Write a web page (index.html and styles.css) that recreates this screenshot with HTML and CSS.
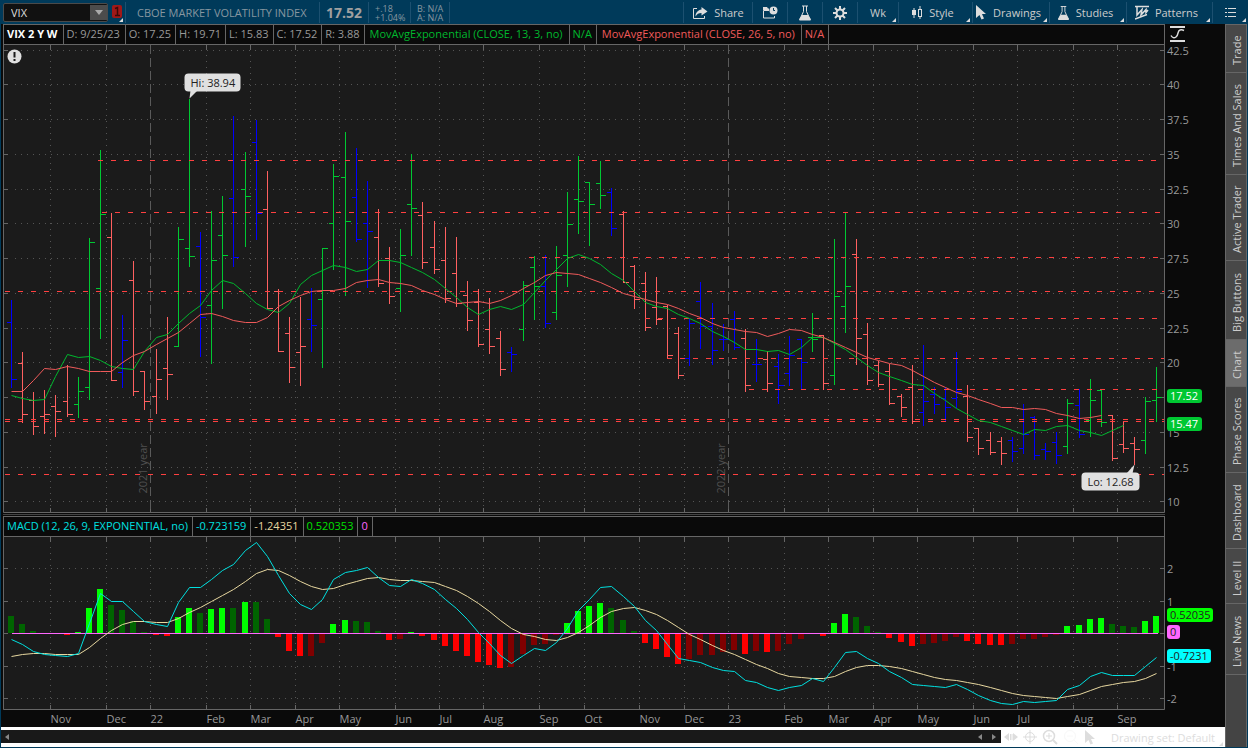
FILE: index.html
```
<!DOCTYPE html>
<html lang="en">
<head>
    <meta charset="UTF-8">
    <meta name="viewport" content="width=device-width, initial-scale=1">
    <title>VIX - Chart</title>
    <link rel="stylesheet" href="styles.css">
</head>
<body>
<header class="toolbar">
    <form class="symbol" action="javascript:void(0);">
        <input type="text" value="VIX" aria-label="Symbol">
        <button type="button" aria-label="Symbol list">
            <svg width="8" height="5" viewBox="0 0 8 5"><path d="M0 0H8L4 5Z" fill="#aaa"/></svg>
        </button>
    </form>
    <button class="link more" aria-label="Link 1">
        <svg width="10" height="13" viewBox="0 0 10 13">
            <rect width="10" height="13" rx="2" fill="#a01818"/>
            <path d="M3 3.500L5.500 2.500V10M3 10.500H8" stroke="#3c0808" stroke-width="1.500" fill="none"/>
        </svg>
    </button>
    <div class="cell name">CBOE MARKET VOLATILITY INDEX</div>
    <div class="cell last">17.52</div>
    <div class="cell two"><span>+.18</span><span>+1.04%</span></div>
    <div class="cell two"><span>B: N/A</span><span>A: N/A</span></div>
    <div class="cell fill"></div>
    <button class="cell share">
        <svg width="16" height="14" viewBox="0 0 16 14">
            <path d="M5 2.500H1.500V12.500H12.500V10" stroke="#ddd" fill="none"/>
            <path d="M9.500 1L15.500 5.500L9.500 9.500V7C6.500 7 5 8 3.500 10.500C3.500 6.500 6 4 9.500 3.500Z" fill="#ddd"/>
        </svg>
        Share
    </button>
    <button class="cell icon36" aria-label="Calendar">
        <svg width="16" height="13" viewBox="0 0 16 13">
            <path d="M7 4.500H1.500V12H12.500V10" stroke="#ddd" fill="none"/>
            <path d="M1 1H5L6 2.500H7V4H1Z" fill="#ddd"/>
            <circle cx="11.500" cy="4.500" r="4" fill="#ddd"/>
            <path d="M11.500 2V4.500H13" stroke="#003a5a" fill="none"/>
        </svg>
    </button>
    <button class="cell icon35" aria-label="Lab">
        <svg width="14" height="16" viewBox="0 0 14 16">
            <path d="M4 1H10M5.500 1V6.500L2 14H12L8.500 6.500V1" stroke="#ddd" fill="none"/>
            <path d="M4 10H10L13 14.500Q13 15.500 12 15.500H2Q1 15.500 1 14.500Z" fill="#ddd"/>
        </svg>
    </button>
    <button class="cell icon35" aria-label="Settings">
        <svg width="14" height="14" viewBox="0 0 14 14">
            <g stroke="#ddd" stroke-width="2"><path d="M7 0V14M0 7H14M2 2L12 12M12 2L2 12"/></g>
            <circle cx="7" cy="7" r="4.500" fill="#ddd"/><circle cx="7" cy="7" r="2.500" fill="#003a5a"/>
        </svg>
    </button>
    <button class="cell wk more">Wk</button>
    <button class="cell style more">
        <svg width="12" height="14" viewBox="0 0 12 14">
            <path d="M3 2V12M9 0V3M9 10V13" stroke="#ddd"/>
            <rect x="1" y="4" width="4" height="5" fill="#ddd"/>
            <rect x="7.500" y="3.500" width="3" height="7" stroke="#ddd" fill="none"/>
        </svg>
        Style
    </button>
    <button class="cell drawings more">
        <svg width="12" height="15" viewBox="0 0 12 15">
            <path d="M1 0L11 9H7L9 13.500L6.500 14.500L4.500 10L1 13Z" fill="#ddd"/>
        </svg>
        Drawings
    </button>
    <button class="cell studies more">
        <svg width="13" height="16" viewBox="0 0 14 16">
            <path d="M4 1H10M5.500 1V6.500L2 14H12L8.500 6.500V1" stroke="#ddd" fill="none"/>
            <path d="M4 10H10L13 14.500Q13 15.500 12 15.500H2Q1 15.500 1 14.500Z" fill="#ddd"/>
        </svg>
        Studies
    </button>
    <button class="cell patterns more">
        <svg width="14" height="15" viewBox="0 0 14 15">
            <path d="M0 1.500H14M0 14L12 9.500" stroke="#ddd" stroke-width="1.500"/>
            <path d="M2 2V10L7 4.500L6 10L11 4.500V7.500L13 5" stroke="#ddd" stroke-width="1.500" fill="none"/>
        </svg>
        Patterns
    </button>
    <button class="cell menu more" aria-label="Menu">
        <svg width="11" height="11" viewBox="0 0 11 11">
            <path d="M0 1.500H2M3 1.500H11M0 5.500H2M3 5.500H11M0 9.500H2M3 9.500H11" stroke="#ddd"/>
        </svg>
    </button>
</header>

<main class="workspace">
    <div class="charts">
        <div class="legend-row">
            <div class="legend">
                <span class="title">VIX 2 Y W</span><span>D: 9/25/23</span><span>O: 17.25</span><span>H: 19.71</span><span>L: 15.83</span><span>C: 17.52</span><span>R: 3.88</span><span class="green study">MovAvgExponential (CLOSE, 13, 3, no)</span><span class="green">N/A</span><span class="red study">MovAvgExponential (CLOSE, 26, 5, no)</span><span class="red">N/A</span>
            </div>
            <button class="scale" aria-label="Axis scale">
                <svg width="15" height="16" viewBox="0 0 15 16">
                    <path d="M0 1H15M0 15H15" stroke="#ddd" stroke-width="2"/>
                    <path d="M1 9.500Q3 13 6 11C9 9 7 5 10 4Q12 3.500 14 4.500" stroke="#ddd" stroke-width="1.500" fill="none"/>
                </svg>
            </button>
        </div>
        <div class="panel price"><svg id="price"></svg></div>
        <div class="splitter"></div>
        <div class="legend-row">
            <div class="legend">
                <span class="cyan">MACD (12, 26, 9, EXPONENTIAL, no)</span><span class="cyan">-0.723159</span><span class="cream">-1.24351</span><span class="lime">0.520353</span><span class="pink">0</span>
            </div>
            <div class="scale"></div>
        </div>
        <div class="panel macd"><svg id="macd"></svg></div>
        <footer class="bottom">
            <div class="scrollbar">
                <button aria-label="Scroll to start"><svg width="4" height="6" viewBox="0 0 4 6"><path d="M4 0V6L0 3Z" fill="#888"/></svg></button>
                <span class="track"></span>
                <button aria-label="Scroll left"><svg width="4" height="6" viewBox="0 0 4 6"><path d="M4 0V6L0 3Z" fill="#888"/></svg></button>
                <button aria-label="Scroll right"><svg width="4" height="6" viewBox="0 0 4 6"><path d="M0 0V6L4 3Z" fill="#888"/></svg></button>
            </div>
            <div class="tools more">
                <button aria-label="Expand">
                    <svg width="14" height="10" viewBox="0 0 14 10"><path d="M5 1V9L0 5ZM9 1V9L14 5Z" fill="#ddd"/><path d="M6.500 2V8M8 2V8" stroke="#ddd"/></svg>
                </button>
                <button aria-label="Crosshair">
                    <svg width="14" height="14" viewBox="0 0 14 14"><circle cx="7" cy="7" r="4.500" stroke="#ddd" fill="none"/><path d="M7 0V14M0 7H14" stroke="#ddd"/></svg>
                </button>
                <button aria-label="Zoom in">
                    <svg width="16" height="16" viewBox="0 0 16 16"><circle cx="7" cy="7" r="5.500" stroke="#ddd" stroke-width="1.500" fill="none"/><path d="M7 4V10M4 7H10" stroke="#ddd"/><path d="M11 11L15 15" stroke="#ddd" stroke-width="2"/></svg>
                </button>
                <button aria-label="Zoom out" disabled>
                    <svg width="16" height="16" viewBox="0 0 16 16"><circle cx="7" cy="7" r="5.500" stroke="#f8f8f8" fill="none"/><path d="M4 7H10M11 11L15 15" stroke="#f8f8f8"/></svg>
                </button>
                <button aria-label="Pointer">
                    <svg width="12" height="15" viewBox="0 0 12 15"><path d="M1 0L11 9H7L9 13.500L6.500 14.500L4.500 10L1 13Z" fill="#ddd"/></svg>
                </button>
                <button class="set">Drawing set: Default</button>
            </div>
        </footer>
    </div>
    <nav class="tabs">
        <button class="t48">Trade</button>
        <button class="t102">Times And Sales</button>
        <button class="t86">Active Trader</button>
        <button class="t79">Big Buttons</button>
        <button class="t47 active">Chart</button>
        <button class="t86">Phase Scores</button>
        <button class="t76">Dashboard</button>
        <button class="t55">Level II</button>
        <button class="t71">Live News</button>
        <span class="rest"></span>
    </nav>
</main>
<script src="chart.js"></script>
</body>
</html>
```
FILE: styles.css
```
* {
    box-sizing: border-box;
}

body {
    margin: 0;
    height: 100vh;
    display: flex;
    flex-direction: column;
    overflow: hidden;
    background: #003a5a;
    color: #999;
    font: 11px "Open Sans", sans-serif;
}

button {
    margin: 0;
    padding: 0;
    border: 0;
    background: none;
    color: #ccc;
    font: inherit;
    white-space: nowrap;
}

svg {
    display: block;
    flex: none;
}

/* toolbar */
.toolbar {
    display: flex;
    align-items: stretch;
    height: 24px;
    padding: 2px 0 1px 3px;
    white-space: nowrap;
}

.symbol {
    display: flex;
    width: 105px;
    height: 19px;
    margin-top: 1px;
    border: 1px solid #4a4a4a;
    border-radius: 2px;
    background: #111;
}

.symbol input {
    flex: 1;
    min-width: 0;
    padding: 0 7px;
    border: 0;
    background: none;
    color: #ddd;
    font: inherit;
}

.symbol button {
    width: 17px;
    margin: 1px 0;
    background: #4c4c4c;
    display: flex;
    align-items: center;
    justify-content: center;
}

.link {
    width: 17px;
    padding: 3px 0 0 4px;
    display: flex;
}

.cell {
    display: flex;
    align-items: center;
    border-left: 1px solid #1c5070;
    font-size: 12px;
}

.more {
    position: relative;
}

.more::after {
    content: "";
    position: absolute;
    right: 2px;
    bottom: 1px;
    border: 2px solid;
    border-color: transparent #ddd #ddd transparent;
}

.name {
    width: 194px;
    padding-left: 11px;
    color: #8797a0;
    font-size: 11px;
}

.last {
    width: 49px;
    padding-left: 6px;
    color: #a0a0a0;
    font-size: 14px;
    font-weight: bold;
}

.two {
    width: 42px;
    padding-left: 6px;
    flex-direction: column;
    align-items: flex-start;
    justify-content: center;
    color: #8797a0;
    font-size: 9px;
    line-height: 9px;
}

.two + .two {
    width: 39px;
}

.fill {
    flex: 1;
}

button.cell {
    font-size: 11px;
    justify-content: center;
    gap: 6px;
}

.share { width: 69px; }
.icon36 { width: 35px; }
.icon35 { width: 35px; }
.wk { width: 41px; }
.style { width: 74px; }
.drawings { width: 77px; }
.studies { width: 77px; }
.patterns { width: 86px; }
.menu { width: 36px; }

button.style,
button.drawings,
button.studies,
button.patterns {
    padding-right: 6px;
}

/* charts */
.workspace {
    flex: 1;
    min-height: 0;
    display: flex;
    margin: 0 1px 1px;
}

.charts {
    flex: 1;
    min-width: 0;
    display: flex;
    flex-direction: column;
    background: #0a0a0a;
}

.legend-row {
    display: flex;
    padding-left: 2px;
}

.legend {
    flex: 1;
    display: flex;
    height: 21px;
    border: 1px solid #666;
    line-height: 17px;
    white-space: nowrap;
    overflow: hidden;
}

.legend span {
    padding: 0 4px 0 3px;
    border-right: 1px solid #666;
}

.legend .title {
    padding-right: 5px;
    color: #fff;
    font-weight: bold;
}

.legend .title + span {
    padding-right: 5px;
}

.legend .study {
    padding: 0 6px 0 5px;
}

.legend .green { color: #00b82e; }
.legend .red { color: #f05a5a; }
.legend .cyan { color: #00e0e0; }
.legend .cream { color: #e8d8a0; }
.legend .lime { color: #00e000; }
.legend .pink { color: #ff66ff; }

.scale {
    display: flex;
    align-items: flex-start;
    width: 60px;
    padding: 2px 0 0 5px;
}

.panel {
    min-height: 0;
    margin-left: 2px;
}

.panel svg {
    width: 100%;
    height: 100%;
    overflow: visible;
}

.price { flex: 468 1 0; }
.macd { flex: 190 1 0; }

.splitter {
    height: 1px;
    margin: 1px 60px 1px 2px;
    background: #444;
}

svg text {
    font: 11px "Open Sans", sans-serif;
    fill: #999;
}

svg .year { fill: #505050; }
svg .dark { fill: #222; }
svg .light { fill: #fff; }

/* scrollbar and drawing tools */
.bottom {
    display: flex;
    height: 20px;
    background: #fff;
}

.scrollbar {
    flex: 1;
    display: flex;
    align-items: center;
    height: 13px;
    margin-top: 3px;
    padding: 0 5px 0 4px;
    background: #191919;
}

.scrollbar .track {
    flex: 1;
}

.scrollbar button + button {
    margin-left: 10px;
}

.tools {
    width: 224px;
    display: flex;
    align-items: center;
    gap: 5px;
    padding-left: 3px;
}

.tools .set {
    margin-left: 10px;
    color: #ddd;
}

/* right hand tabs */
.tabs {
    width: 22px;
    display: flex;
    flex-direction: column;
    border: solid #666;
    border-width: 0 1px;
    background: #444;
}

/* turned upside down, so the bottom edge is drawn on top */
.tabs button {
    width: 20px;
    padding-bottom: 4px;
    border-bottom: 1px solid #666;
    background: #484848;
    writing-mode: vertical-rl;
    transform: rotate(180deg);
    text-align: center;
}

.tabs .active {
    background: #6c6c6c;
}

.tabs .rest {
    flex: 1;
    border-top: 1px solid #666;
}

.t47 { height: 47px; }
.t48 { height: 48px; }
.t55 { height: 55px; }
.t71 { height: 71px; }
.t76 { height: 76px; }
.t79 { height: 79px; }
.t86 { height: 86px; }
.t102 { height: 102px; }
```
FILE: chart.js
```
var PLOT_W = 1162, AXIS_W = 60;
var COLORS = {r: '#ff6060', g: '#00c832', b: '#0000ff'};
var HIST = {G: '#00ff00', g: '#006400', R: '#ff0000', r: '#800000'};

// colour, high, low, open, close
var bars = [
    ['b',299,387,322,379],['r',351,422,363,414],['r',391,434,400,426],['r',389,433,416,414],['r',394,436,406,411],
    ['r',364,416,401,414],['g',376,417,404,391],['g',237,399,387,242],['g',149,338,288,214],['r',212,380,237,380],
    ['b',314,387,372,340],['r',260,395,280,391],['r',370,409,371,401],['r',348,413,396,379],['r',316,399,368,374],
    ['g',226,346,346,239],['g',98,266,248,256],['b',231,356,246,317],['g',210,363,305,260],['g',195,308,235,255],
    ['b',115,266,198,257],['g',151,246,189,196],['b',119,239,142,213],['r',170,308,209,308],['r',288,351,291,351],
    ['r',316,382,333,367],['r',296,385,352,346],['b',287,351,319,325],['g',247,367,299,248],['g',163,269,223,176],
    ['g',131,295,177,221],['b',147,241,197,239],['b',180,287,223,231],['r',208,286,237,283],['r',246,303,258,296],
    ['g',228,311,288,255],['g',153,255,204,208],['r',201,268,215,262],['r',220,273,247,269],['r',226,302,260,298],
    ['r',236,306,273,303],['r',280,330,295,320],['r',288,346,302,344],['r',297,353,329,346],['r',330,375,338,369],
    ['b',346,371,352,354],['g',280,340,329,285],['g',255,319,267,286],['b',254,327,286,323],['g',245,319,312,275],
    ['g',191,286,255,224],['g',155,233,199,201],['g',181,245,182,204],['g',160,208,183,195],['b',187,235,192,228],
    ['r',210,282,214,282],['r',264,308,266,299],['r',271,330,283,327],['r',276,324,307,319],['r',304,358,306,355],
    ['r',326,378,333,375],['b',318,365,358,323],['b',281,348,301,326],['b',302,364,326,350],['b',323,350,339,339],
    ['b',310,349,319,347],['r',328,391,338,385],['b',338,381,364,364],['r',350,391,359,383],['b',353,403,366,385],
    ['b',335,385,373,355],['b',339,389,339,362],['g',312,351,337,339],['r',334,389,335,383],['g',238,384,375,296],
    ['g',212,332,306,286],['r',238,364,254,338],['r',322,384,334,380],['r',360,386,365,384],['r',363,404,371,403],
    ['r',393,416,396,407],['r',364,423,387,421],['b',344,425,412,401],['b',386,413,394,404],['b',386,420,398,407],
    ['b',351,407,398,391],['r',384,441,396,437],['r',428,454,428,448],['r',431,454,440,452],['r',436,464,441,453],
    ['b',436,461,440,451],['b',403,453,448,434],['b',415,459,417,455],['b',442,459,449,451],['b',431,463,442,455],
    ['g',398,453,446,403],['b',388,437,405,434],['g',378,436,420,400],['g',389,426,390,422],['r',414,460,415,458],
    ['r',421,452,444,448],['r',436,464,443,449],['g',396,453,440,401],['g',366,421,400,397]
];

var ema13 = [395,398,400,399,376,354,357,356,360,366,368,369,351,337,334,323,313,305,290,280,283,293,303,309,312,303,
    284,275,270,265,267,271,269,260,260,262,267,272,279,288,297,307,314,309,306,309,304,292,280,269,258,254,258,264,
    273,280,291,302,306,308,314,318,323,331,336,342,349,349,351,350,354,347,337,337,343,349,357,365,372,376,380,384,
    385,393,400,408,414,420,422,426,430,434,429,430,426,425,430,432,435,430,425];

var ema26 = [391,391,380,368,369,366,368,371,371,371,362,355,351,344,338,332,323,314,313,316,320,322,322,317,306,300,
    295,291,290,290,288,282,280,279,282,283,285,290,294,299,303,302,301,303,300,295,288,282,275,272,273,274,278,282,
    287,293,296,299,302,304,308,313,317,323,327,329,331,332,336,333,329,330,334,337,342,347,352,357,360,363,365,370,
    376,382,387,392,395,399,403,407,407,409,408,409,413,415,418,417,415];

var macdLine = [639,644,651,654,655,656,653,623,593,601,601,611,621,624,626,602,587,587,579,570,564,550,542,556,575,
    593,604,609,599,579,572,570,567,577,585,586,579,583,589,599,608,619,632,643,655,663,655,648,650,642,628,610,599,
    587,586,596,606,620,630,644,658,660,662,667,670,671,680,682,687,690,687,685,678,681,667,652,651,658,663,671,677,
    684,685,686,687,684,689,695,700,703,704,701,702,701,700,689,685,676,672,675,675,675,666,657];

var signalLine = [656,654,653,653,654,654,654,647,638,630,624,621,621,622,622,618,612,607,601,595,589,581,573,569,570,
    575,581,586,589,588,584,581,578,577,579,580,580,581,582,586,590,596,603,611,620,628,634,636,639,640,637,632,625,
    617,611,608,607,610,614,620,627,634,639,645,650,654,659,664,668,673,676,677,678,678,676,671,667,665,665,666,668,
    671,674,677,679,680,682,684,687,690,693,695,696,697,698,696,694,690,686,684,682,681,678,673];

var hist = ('g17 g9 g2 g0 R-1 R-2 G1 G25 G44 g28 g23 g12 g1 R-2 R-3 G16 G25 g20 G24 G25 g25 G31 g31 g14 R-4 R-18 R-23 ' +
    'r-23 r-10 G9 G13 g12 g11 g2 R-7 r-6 G1 R-3 R-7 R-13 R-18 R-23 R-29 R-32 R-35 r-34 r-21 r-12 r-11 r-2 G10 G22 G27 ' +
    'G30 g25 g13 g2 R-10 R-16 R-24 R-31 r-26 r-22 r-22 r-19 r-17 R-21 r-18 R-19 r-18 r-11 r-6 r-1 R-3 G10 G19 g16 g7 ' +
    'g1 R-5 R-9 R-13 r-11 r-10 r-8 r-4 R-8 R-11 R-12 R-12 r-11 r-6 r-6 r-4 r-2 G7 G8 G14 G15 g9 g7 g6 G12 G17').split(' ');

// y, first x of each support / resistance level
var levels = [[160,98],[212,102],[257,529],[291,5],[318,645],[358,667],[389,749],[419,5],[421,5],[474,5]];

var prices = [[50,'42.5'],[84,'40'],[119,'37.5'],[154,'35'],[189,'32.5'],[223,'30'],[258,'27.5'],[293,'25'],
    [328,'22.5'],[362,'20'],[397,''],[432,'15'],[467,'12.5'],[501,'10']];

var months = [[50,'Nov'],[106,'Dec'],[150,'22'],[206,'Feb'],[250,'Mar'],[295,'Apr'],[339,'May'],[395,'Jun'],[439,'Jul'],
    [483,'Aug'],[539,'Sep'],[584,'Oct'],[639,'Nov'],[684,'Dec'],[728,'23'],[784,'Feb'],[828,'Mar'],[873,'Apr'],
    [917,'May'],[973,'Jun'],[1017,'Jul'],[1073,'Aug'],[1117,'Sep']];

function add(svg, tag, attrs, text) {
    var el = document.createElementNS('http://www.w3.org/2000/svg', tag);
    for (var k in attrs) el.setAttribute(k, attrs[k]);
    if (text) el.textContent = text;
    svg.appendChild(el);
}

function line(svg, x1, y1, x2, y2, color, dash) {
    add(svg, 'line', {x1: x1, y1: y1, x2: x2, y2: y2, stroke: color,
        'stroke-dasharray': dash || 'none', 'shape-rendering': 'crispEdges'});
}

function barX(i) {
    return Math.round(11 + 11.12 * i);
}

function tag(svg, x, y, w, label, color, cls) {
    add(svg, 'rect', {x: x, y: y, width: w, height: 14, rx: 3, fill: color});
    add(svg, 'text', {x: x + 3, y: y + 11, 'class': cls}, label);
}

// scales for one panel: top is the first plot row, h the plot height
function setup(id, top, h, footer) {
    var svg = document.getElementById(id);
    var box = svg.getBoundingClientRect();
    svg.innerHTML = '';
    var p = {svg: svg, w: Math.round(box.width) - AXIS_W, h: Math.round(box.height) - footer};
    p.x = function (v) { return Math.round((v - 3) * p.w / PLOT_W) + 0.5; };
    p.y = function (v) { return Math.round((v - top) * p.h / h) + 0.5; };
    add(svg, 'rect', {width: p.w, height: p.h, fill: '#1b1b1b'});
    return p;
}

function grid(p, rows) {
    rows.forEach(function (r) {
        var y = p.y(r[0]);
        line(p.svg, 12, y, p.w - 13, y, '#555', '1 5');
        line(p.svg, 0, y, 5, y, '#666');
        line(p.svg, p.w - 5, y, p.w, y, '#666');
        if (r[1]) add(p.svg, 'text', {x: p.w + 2, y: y + 4}, r[1]);
    });
    months.forEach(function (m) {
        var x = p.x(m[0]);
        if (!/\d/.test(m[1]) || p.svg.id == 'macd') line(p.svg, x, 10, x, p.h - 5, '#555', '1 5');
        line(p.svg, x, 0, x, 5, '#666');
        line(p.svg, x, p.h - 5, x, p.h, '#666');
    });
}

function frame(p) {
    add(p.svg, 'path', {d: 'M0.5 0V' + (p.h - 0.5) + 'H' + (p.w - 0.5) + 'V0', stroke: '#666', fill: 'none'});
}

function curve(p, data, color) {
    var pts = data.map(function (v, i) { return p.x(barX(i)) + ',' + p.y(v); }).join(' ');
    add(p.svg, 'polyline', {points: pts, stroke: color, fill: 'none'});
}

function drawPrice() {
    var p = setup('price', 45, 468, 0), svg = p.svg;
    grid(p, prices);
    [[150, '2021 year'], [728, '2022 year']].forEach(function (v) {
        var x = p.x(v[0]);
        line(svg, x, 0, x, p.h, '#5a5a5a', '9 4');
        add(svg, 'text', {transform: 'translate(' + (x - 4) + ',' + p.y(493) + ') rotate(-90)', 'class': 'year'}, v[1]);
    });
    bars.forEach(function (b, i) {
        var x = p.x(barX(i)), c = COLORS[b[0]];
        line(svg, x, p.y(b[1]), x, p.y(b[2]), c);
        line(svg, x - 4.5, p.y(b[3]), x, p.y(b[3]), c);
        line(svg, x, p.y(b[4]), x + 5, p.y(b[4]), c);
    });
    levels.forEach(function (l) {
        line(svg, p.x(l[1]) - 0.5, p.y(l[0]), p.w - 1, p.y(l[0]), '#ff4040', '5 8');
    });
    curve(p, ema13, '#00b82e');
    curve(p, ema26, '#f05a5a');
    frame(p);

    // high and low callouts
    var x = p.x(189), y = p.y(98);
    add(svg, 'path', {d: 'M' + x + ' ' + y + 'l1 -8h7z', fill: '#e0e0e0'});
    add(svg, 'rect', {x: x - 5, y: y - 25, width: 56, height: 18, rx: 4, fill: '#e0e0e0'});
    add(svg, 'text', {x: x + 1, y: y - 12, 'class': 'dark'}, 'Hi: 38.94');
    x = p.x(1134);
    y = p.y(464);
    add(svg, 'path', {d: 'M' + x + ' ' + y + 'l-8 9h6z', fill: '#e0e0e0'});
    add(svg, 'rect', {x: x - 53, y: y + 8, width: 58, height: 18, rx: 4, fill: '#e0e0e0'});
    add(svg, 'text', {x: x - 47, y: y + 21, 'class': 'dark'}, 'Lo: 12.68');

    // notice icon
    add(svg, 'circle', {cx: 11.5, cy: 11.5, r: 7, fill: '#e0e0e0'});
    add(svg, 'path', {d: 'M11.5 7V12.5M11.5 14V16', stroke: '#1b1b1b', 'stroke-width': 2});

    tag(svg, p.w + 2, p.y(389) - 0.5, 35, '17.52', '#00c832', 'light');
    tag(svg, p.w + 2, p.y(417) - 0.5, 35, '15.47', '#00c832', 'light');
}

function drawMacd() {
    var p = setup('macd', 537, 173, 17), svg = p.svg, zero = p.y(633);
    grid(p, [[568, '2'], [601, '1'], [666, '-1'], [698, '-2']]);
    line(svg, 0, zero, 5, zero, '#666');
    line(svg, p.w - 5, zero, p.w, zero, '#666');
    hist.forEach(function (s, i) {
        var v = Math.round(+s.slice(1) * p.h / 173);
        add(svg, 'rect', {x: p.x(barX(i)) - 3.5, y: v > 0 ? zero - 0.5 - v : zero - 0.5,
            width: 6, height: v > 0 ? v : -v, fill: HIST[s[0]]});
    });
    line(svg, p.x(11), zero, p.x(1157), zero, '#ff66ff');
    curve(p, signalLine, '#e8d8a0');
    curve(p, macdLine, '#00e0e0');
    frame(p);
    months.forEach(function (m) {
        add(svg, 'text', {x: p.x(m[0]), y: p.h + 13}, m[1]);
    });
    tag(svg, p.w + 2, p.y(608) - 0.5, 46, '0.52035', '#00ff00', 'dark');
    tag(svg, p.w + 2, p.y(625) - 0.5, 13, '0', '#ff66ff', 'dark');
    tag(svg, p.w + 2, p.y(649) - 0.5, 44, '-0.7231', '#00ffff', 'dark');
}

function draw() {
    drawPrice();
    drawMacd();
}

window.addEventListener('resize', draw);
draw();
```
